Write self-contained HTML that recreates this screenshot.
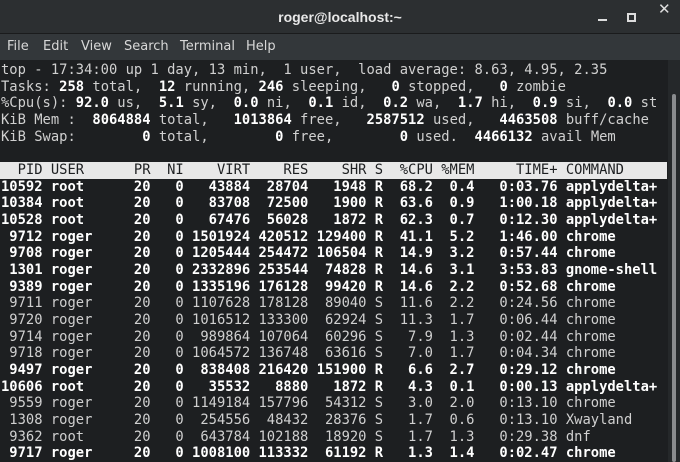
<!DOCTYPE html>
<html><head><meta charset="utf-8"><style>
*{margin:0;padding:0;box-sizing:border-box}
html,body{width:680px;height:462px;overflow:hidden;background:#1d1f21}
#title{position:absolute;left:0;top:0;width:680px;height:34px;background:#2c2f31;border-bottom:1px solid #1a1b1c;color:#e8e8e8;font:bold 14px "Liberation Sans",sans-serif;text-align:center;line-height:34px}
.wb{position:absolute;top:0;height:34px;line-height:34px;color:#ddd;font:bold 14px "DejaVu Sans",sans-serif}
#menu{position:absolute;left:0;top:34px;width:680px;height:26px;background:#33373a;color:#d8d8d8;font:13px "DejaVu Sans","Liberation Sans",sans-serif;line-height:26px}
#menu span{position:absolute;top:0}
#term{position:absolute;left:0;top:60px;width:668px;height:402px;background:#1d1f21}
#sb{position:absolute;left:668px;top:60px;width:12px;height:402px;background:#25282a}
#sb div{position:absolute;left:4px;top:34px;width:4px;height:368px;background:#8a8c8e;border-radius:2px}
pre{position:absolute;left:1px;top:62px;font-family:"DejaVu Sans Mono",monospace;font-size:13.8px;line-height:16.67px;color:#d0d0d0}
b{color:#fff;font-weight:bold}
.h{display:inline-block;background:#e8e8e8;color:#1d1f21;width:667px;margin-left:-1px;padding-left:1px}
.B{color:#fff;font-weight:bold}
</style></head><body>
<div id="title">roger@localhost:~</div>
<div class="wb" style="left:596px;width:14px"><div style="position:absolute;top:19px;left:2px;width:9px;height:2px;background:#ddd"></div></div>
<div class="wb" style="left:627px"><div style="position:absolute;top:13px;left:0;width:9px;height:9px;border:2px solid #ddd"></div></div>
<div class="wb" style="left:658px;font-size:15px">✕</div>
<div id="menu"><span style="left:7px">File</span><span style="left:43px">Edit</span><span style="left:81px">View</span><span style="left:124px">Search</span><span style="left:180px">Terminal</span><span style="left:246px">Help</span></div>
<div id="term"></div>
<div id="sb"><div></div></div>
<pre>top - 17:34:00 up 1 day, 13 min,  1 user,  load average: 8.63, 4.95, 2.35
Tasks: <b>258</b> total,  <b>12</b> running, <b>246</b> sleeping,   <b>0</b> stopped,   <b>0</b> zombie
%Cpu(s): <b>92.0</b> us,  <b>5.1</b> sy,  <b>0.0</b> ni,  <b>0.1</b> id,  <b>0.2</b> wa,  <b>1.7</b> hi,  <b>0.9</b> si,  <b>0.0</b> st
KiB Mem : <b> 8064884</b> total,  <b> 1013864</b> free,  <b> 2587512</b> used,  <b> 4463508</b> buff/cache
KiB Swap:        <b>0</b> total,        <b>0</b> free,        <b>0</b> used.  <b>4466132</b> avail Mem

<span class="h">  PID USER      PR  NI    VIRT    RES    SHR S  %CPU %MEM     TIME+ COMMAND</span>
<span class="B">10592 root      20   0   43884  28704   1948 R  68.2  0.4   0:03.76 applydelta+</span>
<span class="B">10384 root      20   0   83708  72500   1900 R  63.6  0.9   1:00.18 applydelta+</span>
<span class="B">10528 root      20   0   67476  56028   1872 R  62.3  0.7   0:12.30 applydelta+</span>
<span class="B"> 9712 roger     20   0 1501924 420512 129400 R  41.1  5.2   1:46.00 chrome</span>
<span class="B"> 9708 roger     20   0 1205444 254472 106504 R  14.9  3.2   0:57.44 chrome</span>
<span class="B"> 1301 roger     20   0 2332896 253544  74828 R  14.6  3.1   3:53.83 gnome-shell</span>
<span class="B"> 9389 roger     20   0 1335196 176128  99420 R  14.6  2.2   0:52.68 chrome</span>
 9711 roger     20   0 1107628 178128  89040 S  11.6  2.2   0:24.56 chrome
 9720 roger     20   0 1016512 133300  62924 S  11.3  1.7   0:06.44 chrome
 9714 roger     20   0  989864 107064  60296 S   7.9  1.3   0:02.44 chrome
 9718 roger     20   0 1064572 136748  63616 S   7.0  1.7   0:04.34 chrome
<span class="B"> 9497 roger     20   0  838408 216420 151900 R   6.6  2.7   0:29.12 chrome</span>
<span class="B">10606 root      20   0   35532   8880   1872 R   4.3  0.1   0:00.13 applydelta+</span>
 9559 roger     20   0 1149184 157796  54312 S   3.0  2.0   0:13.10 chrome
 1308 roger     20   0  254556  48432  28376 S   1.7  0.6   0:13.10 Xwayland
 9362 root      20   0  643784 102188  18920 S   1.7  1.3   0:29.38 dnf
<span class="B"> 9717 roger     20   0 1008100 113332  61192 R   1.3  1.4   0:02.47 chrome</span></pre>
</body></html>
